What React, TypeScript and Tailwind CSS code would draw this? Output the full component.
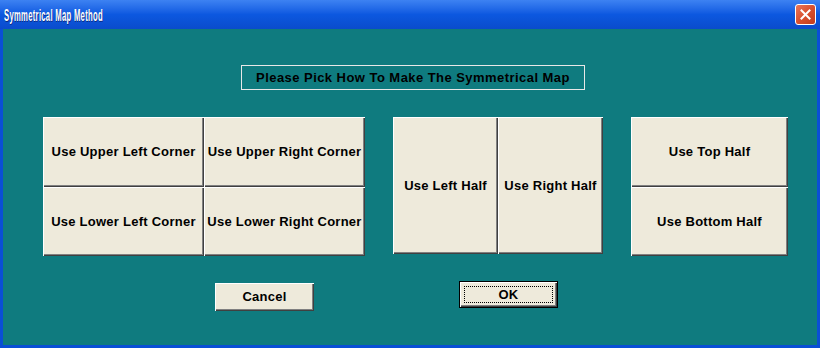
import React from "react";

const btn =
  "flex items-center justify-center bg-[#eeeadb] text-black font-bold text-[13px] tracking-[0.25px] shadow-[inset_1px_1px_0_#ffffff,inset_-1px_-1px_0_#404040,inset_-2px_-2px_0_#808080]";

function Btn({ label, className }: { label: string; className: string }) {
  return <div className={`${btn} ${className}`}>{label}</div>;
}

export default function App() {
  return (
    <div
      className="w-[820px] h-[348px] flex flex-col bg-[#0a4fd6] overflow-hidden"
      style={{ fontFamily: '"Liberation Sans", Arial, sans-serif' }}
    >
      <div className="h-[29px] flex items-center justify-between pl-[4px] pr-[4px] bg-gradient-to-b from-[#3d82f2] via-[#0c58e0] to-[#0a4ccc]">
        <span className="inline-block origin-left scale-x-[0.48] whitespace-nowrap text-white font-bold text-[16px] tracking-[0.6px] pt-[2px] [text-shadow:1px_1px_0_#0a2a80]">
          Symmetrical Map Method
        </span>
        <div className="w-[21px] h-[21px] rounded-[3px] border border-white bg-gradient-to-br from-[#e8765a] via-[#d9502e] to-[#c23c1c] flex items-center justify-center">
          <svg width="11" height="11" viewBox="0 0 11 11">
            <path d="M1.5 1.5 L9.5 9.5 M9.5 1.5 L1.5 9.5" stroke="#ffffff" strokeWidth="2" strokeLinecap="square" />
          </svg>
        </div>
      </div>
      <div className="flex-1 mx-[3px] mb-[3px] bg-[#0f7b7f] pl-[40px] pt-[36px] flex flex-col">
        <div className="ml-[198px] w-[344px] h-[25px] border border-[#e8e8e8] flex items-center justify-center text-black font-bold text-[13px] tracking-[0.45px]">
          Please Pick How To Make The Symmetrical Map
        </div>
        <div className="mt-[27px] flex items-start">
          <div className="grid grid-cols-2 grid-rows-2 w-[322px] h-[139px]">
            <Btn label="Use Upper Left Corner" className="" />
            <Btn label="Use Upper Right Corner" className="" />
            <Btn label="Use Lower Left Corner" className="" />
            <Btn label="Use Lower Right Corner" className="" />
          </div>
          <div className="ml-[28px] grid grid-cols-2 w-[210px] h-[137px]">
            <Btn label="Use Left Half" className="" />
            <Btn label="Use Right Half" className="" />
          </div>
          <div className="ml-[28px] grid grid-rows-2 w-[157px] h-[139px]">
            <Btn label="Use Top Half" className="" />
            <Btn label="Use Bottom Half" className="" />
          </div>
        </div>
        <div className="flex items-start mt-[25px]">
          <Btn label="Cancel" className="ml-[172px] mt-[2px] w-[99px] h-[28px]" />
          <div className="ml-[145px] w-[99px] h-[27px] border border-black">
            <div className={`${btn} w-full h-full`}>
              <div className="border border-dotted border-black w-[89px] h-[17px] flex items-center justify-center">
                OK
              </div>
            </div>
          </div>
        </div>
      </div>
    </div>
  );
}
